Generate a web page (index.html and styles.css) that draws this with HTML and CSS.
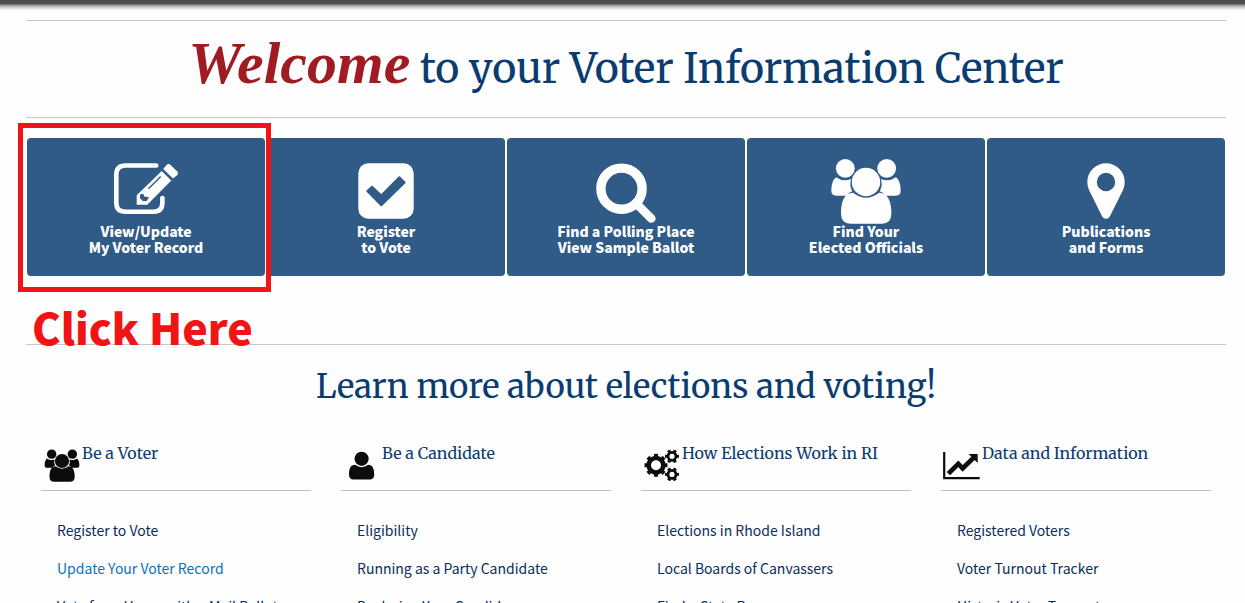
FILE: index.html
```html
<!DOCTYPE html>
<html lang="en">
<head>
    <meta charset="UTF-8">
    <meta name="viewport" content="width=device-width, initial-scale=1.0">
    <title>Voter Information Center</title>
    <link rel="stylesheet" href="styles.css">
</head>
<body>
    <div class="top-bar"></div>

    <main class="container">
        <h1 class="page-title"><span class="welcome">Welcome</span> to your Voter Information Center</h1>

        <!-- Main actions -->
        <nav class="tiles">
            <div class="tile-wrap">
                <a class="tile" href="#">
                    <svg class="tile-icon" viewBox="0 0 72 66" fill="currentColor">
                        <path d="M46.3 7.5H15.5Q6.3 7.5 6.3 16.7V44.5Q6.3 53.7 15.5 53.7H43.2Q52.4 53.7 52.4 44.5V40" fill="none" stroke="currentColor" stroke-width="4.6" stroke-linecap="round"/>
                        <path fill-rule="evenodd" d="M51.7 13L61.3 22.4L37.3 46.7H26.7V37.2ZM38 30.2L39 31.2L51.2 19L50.2 18ZM30 36.5L33.3 35.7L34.3 38.5L39 39.3L36.7 43H32.7L30 40.3Z"/>
                        <path d="M53.2 11L56.4 7.2Q58.3 5.1 60.6 7L67 13.2Q69 15.4 67 17.2L63 20.6Z"/>
                    </svg>
                    View/Update<br>My Voter Record
                </a>
                <div class="callout"></div>
                <strong class="callout-text">Click Here</strong>
            </div>
            <a class="tile" href="#">
                <svg class="tile-icon" viewBox="0 0 72 66" fill="currentColor">
                    <rect x="8.3" y="5.3" width="55.4" height="55.4" rx="10"/>
                    <path class="cutout" d="M17.3 33L22 28.7L31.3 37.4L49.3 19.2L54.6 24.5L31.3 47.2Z" stroke-width="2" stroke-linejoin="round"/>
                </svg>
                Register<br>to Vote
            </a>
            <a class="tile" href="#">
                <svg class="tile-icon" viewBox="0 0 72 66" fill="none" stroke="currentColor">
                    <circle cx="31.5" cy="30.7" r="20.6" stroke-width="9.4"/>
                    <path d="M47 46.2L61.3 60.5" stroke-width="8.6" stroke-linecap="round"/>
                </svg>
                Find a Polling Place<br>View Sample Ballot
            </a>
            <a class="tile" href="#">
                <svg class="tile-icon" viewBox="0 0 72 66" fill="currentColor">
                    <g id="people">
                        <circle cx="15.3" cy="10.3" r="9.4"/>
                        <circle cx="56.7" cy="10.3" r="9.4"/>
                        <circle cx="36" cy="24" r="14.2"/>
                        <path d="M6 19.2Q13.5 24.2 21 21Q19.2 28 22.2 33.2Q18.5 34.3 16.4 37.7H6.3Q1.3 37.7 1.3 32.5Q1.3 23 6 19.2Z"/>
                        <path d="M66 19.2Q58.5 24.2 51 21Q52.8 28 49.8 33.2Q53.5 34.3 55.6 37.7H65.7Q70.7 37.7 70.7 32.5Q70.7 23 66 19.2Z"/>
                        <path d="M23 34.7Q36 44.6 49.2 34.7C58 34.7 61.4 43.5 61.4 55.5Q61.4 65.7 52 65.7H20.4Q11 65.7 11 55.5C11 43.5 14.2 34.7 23 34.7Z"/>
                    </g>
                </svg>
                Find Your<br>Elected Officials
            </a>
            <a class="tile" href="#">
                <svg class="tile-icon" viewBox="0 0 72 66" fill="currentColor">
                    <path fill-rule="evenodd" d="M36 5.3A18.7 18.7 0 0 1 54.7 24Q54.7 28.7 53 32L39.8 58.4Q38.6 60.7 36 60.7Q33.4 60.7 32.2 58.4L19 32Q17.3 28.7 17.3 24A18.7 18.7 0 0 1 36 5.3ZM36 14.8A9.2 9.2 0 1 0 36 33.2A9.2 9.2 0 1 0 36 14.8Z"/>
                </svg>
                Publications<br>and Forms
            </a>
        </nav>

        <h2 class="section-title">Learn more about elections and voting!</h2>

        <!-- Link columns -->
        <div class="columns">
            <section class="column">
                <h3 class="column-title">
                    <svg class="column-icon" viewBox="0 0 40 33" fill="currentColor">
                        <use href="#people" transform="translate(3 0) scale(.5)"/>
                    </svg>
                    Be a Voter
                </h3>
                <ul class="links">
                    <li><a href="#">Register to Vote</a></li>
                    <li><a class="active" href="#">Update Your Voter Record</a></li>
                    <li><a href="#">Vote from Home with a Mail Ballot</a></li>
                </ul>
            </section>
            <section class="column">
                <h3 class="column-title">
                    <svg class="column-icon" viewBox="0 0 40 33" fill="currentColor">
                        <circle cx="20.6" cy="9.8" r="7.1"/>
                        <path d="M14 15.8Q20.6 20.6 27.2 15.8C31.6 15.8 33.2 20 33.2 25.4Q33.2 30.4 28.6 30.4H12.6Q8 30.4 8 25.4C8 20 9.6 15.8 14 15.8Z"/>
                    </svg>
                    Be a Candidate
                </h3>
                <ul class="links">
                    <li><a href="#">Eligibility</a></li>
                    <li><a href="#">Running as a Party Candidate</a></li>
                    <li><a href="#">Declaring Your Candidacy</a></li>
                </ul>
            </section>
            <section class="column">
                <h3 class="column-title">
                    <svg class="column-icon" viewBox="0 0 40 33" fill="none" stroke="currentColor">
                        <circle cx="15" cy="16.3" r="7.3" stroke-width="4.6"/>
                        <circle cx="15" cy="16.3" r="9.8" stroke-width="3.4" pathLength="80" stroke-dasharray="5 5" stroke-dashoffset="2.5"/>
                        <circle cx="31" cy="7.3" r="4" stroke-width="2.8"/>
                        <circle cx="31" cy="7.3" r="5.9" stroke-width="2.2" pathLength="60" stroke-dasharray="5 5" stroke-dashoffset="2.5"/>
                        <circle cx="31" cy="25.4" r="4" stroke-width="2.8"/>
                        <circle cx="31" cy="25.4" r="5.9" stroke-width="2.2" pathLength="60" stroke-dasharray="5 5" stroke-dashoffset="2.5"/>
                    </svg>
                    How Elections Work in RI
                </h3>
                <ul class="links">
                    <li><a href="#">Elections in Rhode Island</a></li>
                    <li><a href="#">Local Boards of Canvassers</a></li>
                    <li><a href="#">Find a State Rep</a></li>
                </ul>
            </section>
            <section class="column">
                <h3 class="column-title">
                    <svg class="column-icon" viewBox="0 0 40 33" fill="none" stroke="currentColor">
                        <path d="M3.2 3V29.2H38.7" stroke-width="2.2"/>
                        <path d="M7.4 24.6L17.3 14.8L21.6 19.4L33.4 8" stroke-width="4.6"/>
                        <path d="M27.7 5H36.7V14Z" fill="currentColor" stroke="none"/>
                    </svg>
                    Data and Information
                </h3>
                <ul class="links">
                    <li><a href="#">Registered Voters</a></li>
                    <li><a href="#">Voter Turnout Tracker</a></li>
                    <li><a href="#">Historic Voter Turnout</a></li>
                </ul>
            </section>
        </div>
    </main>
</body>
</html>
```

FILE: styles.css
```css
* {
    margin: 0;
    padding: 0;
    box-sizing: border-box;
}

body {
    background: #fefefe;
    color: #0a2d5a;
    font-family: "Source Sans Pro", "Noto Sans CJK SC", sans-serif;
    font-size: 14px;
}

a {
    color: inherit;
    text-decoration: none;
}

.top-bar {
    height: 10px;
    background: linear-gradient(#484848, #505050 35%, #b0b0b0 60%, #fefefe);
}

.container {
    margin: 10px 19px 0 26px;
}

.page-title,
.section-title,
.column-title {
    color: #0a3c70;
    font-family: Merriweather, "DejaVu Serif Condensed", "DejaVu Serif", serif;
    font-weight: normal;
}

.page-title {
    padding: 8px 0;
    border-top: 1px solid #c8c8c8;
    border-bottom: 1px solid #c8c8c8;
    font-size: 41px;
    line-height: 80px;
    text-align: center;
}

.welcome {
    color: #a01c22;
    font-family: Satisfy, "Liberation Serif", serif;
    font-size: 60px;
    font-style: italic;
    font-weight: bold;
    line-height: 1;
}

.tiles {
    display: grid;
    grid-template-columns: repeat(5, 1fr);
    gap: 2px;
    padding: 20px 1px 68px;
    border-bottom: 1px solid #c8c8c8;
}

.tile-wrap {
    position: relative;
}

.tile {
    display: block;
    padding: 20px 8px 21px;
    border-radius: 4px;
    background: #305b87;
    color: #fff;
    font-weight: 900;
    line-height: 16px;
    text-align: center;
}

.tile-icon {
    display: block;
    width: 72px;
    height: 66px;
    margin: 0 auto -1px;
}

.cutout {
    fill: #305b87;
    stroke: #305b87;
}

/* Red frame around the first tile */
.callout {
    position: absolute;
    top: -15px;
    right: -6px;
    bottom: -16px;
    left: -9px;
    border: 5px solid #f01414;
    pointer-events: none;
}

.callout-text {
    position: absolute;
    top: 158px;
    left: 5px;
    color: #f01414;
    font-size: 43px;
    font-weight: 900;
    line-height: 60px;
    white-space: nowrap;
}

.section-title {
    padding: 17px 0 15px;
    font-size: 33px;
    line-height: 50px;
    text-align: center;
}

.columns {
    display: grid;
    grid-template-columns: repeat(4, 1fr);
    gap: 30px;
    padding: 16px 15px;
}

.column-title {
    display: flex;
    gap: 1px;
    height: 48px;
    border-bottom: 1px solid #c0c0c0;
    font-size: 16px;
    line-height: 20px;
}

.column-icon {
    flex: none;
    width: 40px;
    height: 33px;
    margin-top: 6px;
    color: #0c0c0c;
}

.links {
    padding: 20px 16px;
    list-style: none;
}

.links a {
    display: block;
    padding: 8px 0;
    line-height: 22px;
}

.links .active {
    color: #0a72ba;
}
```
